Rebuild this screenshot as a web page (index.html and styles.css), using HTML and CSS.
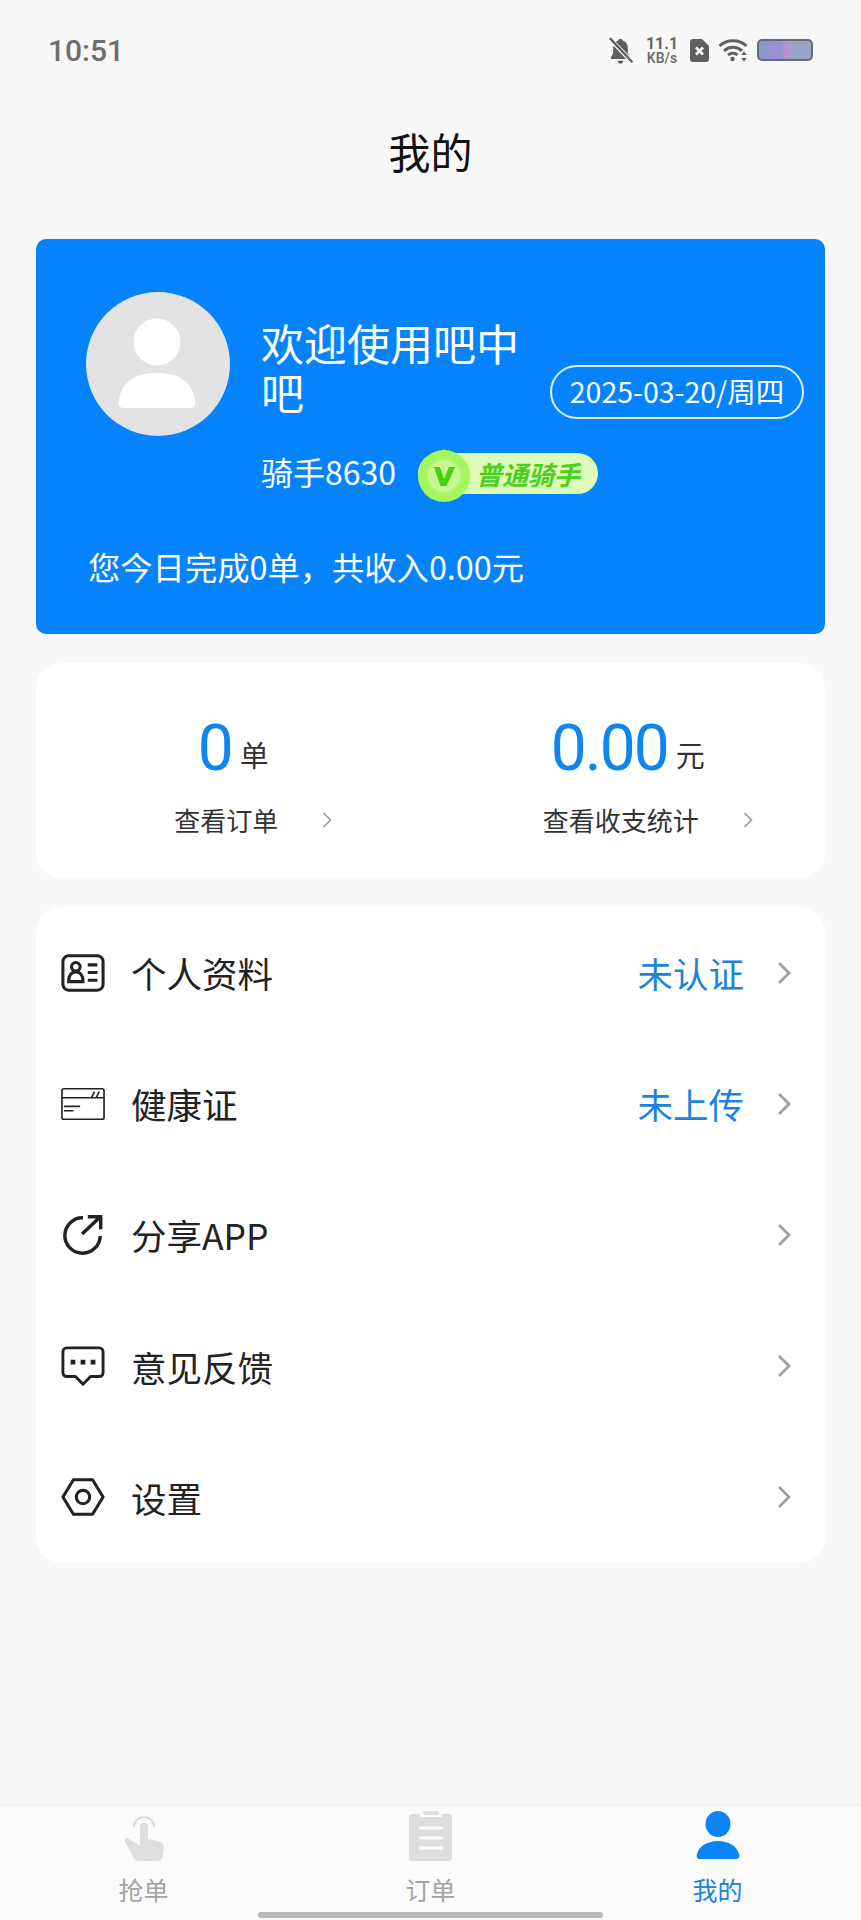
FILE: index.html
```html
<!DOCTYPE html>
<html lang="zh-CN">
<head>
    <meta charset="UTF-8">
    <meta name="viewport" content="width=device-width, initial-scale=1.0">
    <title>我的</title>
    <link rel="stylesheet" href="styles.css">
</head>
<body>
    <div class="page">
        <div class="status-bar">
            <span class="time">10:51</span>
            <div class="status-icons">
                <svg class="ic-bell" viewBox="0 0 24 24"><path d="M12 1.500c-1 0-1.700.7-1.800 1.600C7 4 5.500 6.500 5.500 9.500v5L3.500 18v1.500h17V18l-2-3.500v-5c0-3-1.500-5.500-4.700-6.400-.1-.9-.8-1.600-1.800-1.600zM9.500 21a2.500 2.500 0 0 0 5 0z" fill="#5f5f5f"/><path d="M2.500 1.500l20 21" stroke="#f8f8f8" stroke-width="4"/><path d="M2.500 1l20 21.500" stroke="#5f5f5f" stroke-width="2"/></svg>
                <div class="speed"><span class="speed-num">11.1</span><span class="speed-unit">KB/s</span></div>
                <svg class="ic-sim" viewBox="0 0 19 23"><path d="M3 0h9l7 7v13a3 3 0 0 1-3 3H3a3 3 0 0 1-3-3V3a3 3 0 0 1 3-3z" fill="#5f5f5f"/><path d="M6 8.500l7 7M13 8.500l-7 7" stroke="#fff" stroke-width="2.600"/></svg>
                <svg class="ic-wifi" viewBox="0 0 30 24" fill="none" stroke="#5f5f5f" stroke-width="3"><path d="M1.500 8C8.500 1 21.500 1 28.500 8"/><path d="M6 12.800c5-4.600 13-4.600 18 0"/><path d="M10 17c2.800-2.300 6.700-2.300 9.500 0"/><circle cx="14.500" cy="21" r="2.200" fill="#5f5f5f" stroke="none"/><path d="M26 13.500l-2.800 3.500h5.600zM26 23.500l-2.800-3.500h5.600z" fill="#5f5f5f" stroke="none"/></svg>
                <div class="battery"></div>
            </div>
        </div>

        <h1 class="page-title">我的</h1>

        <div class="profile-card">
            <div class="profile-top">
                <svg class="avatar" viewBox="0 0 144 144"><circle cx="72" cy="72" r="72" fill="#e3e3e5"/><circle cx="71" cy="50" r="23.500" fill="#fff"/><path d="M38 116c-5 0-6-3-5-8 3-19 17-27 38-27s35 8 38 27c1 5 0 8-5 8z" fill="#fff"/></svg>
                <div class="profile-info">
                    <div class="greeting">欢迎使用吧中吧</div>
                    <div class="rider-row">
                        <span class="rider-name">骑手8630</span>
                        <div class="level-badge">
                            <svg class="level-icon" viewBox="0 0 54 58"><path d="M9 14L27 5l18 9v6H9z" fill="#45e01c"/><circle cx="27" cy="32" r="26" fill="#a3f65c"/><circle cx="27" cy="32" r="17" fill="#c5f98f" stroke="#b2f274" stroke-width="2"/><path d="M17 23h6l4 12 5-12h6l-8.500 19h-6z" fill="#47cf12"/></svg>
                            <span class="level-text">普通骑手</span>
                        </div>
                    </div>
                </div>
                <div class="date-pill">2025-03-20/周四</div>
            </div>
            <div class="today-line">您今日完成0单，共收入0.00元</div>
        </div>

        <div class="stats-card">
            <div class="stat">
                <div class="stat-value"><span class="stat-num">0</span><span class="stat-unit">单</span></div>
                <div class="stat-link"><span>查看订单</span><svg class="chev-sm" viewBox="0 0 10 18"><path d="M1.500 2l7 7-7 7" fill="none" stroke="#999" stroke-width="1.600"/></svg></div>
            </div>
            <div class="stat">
                <div class="stat-value"><span class="stat-num">0.00</span><span class="stat-unit">元</span></div>
                <div class="stat-link"><span>查看收支统计</span><svg class="chev-sm" viewBox="0 0 10 18"><path d="M1.500 2l7 7-7 7" fill="none" stroke="#999" stroke-width="1.600"/></svg></div>
            </div>
        </div>

        <div class="menu-card">
            <div class="menu-row">
                <svg class="menu-icon" viewBox="0 0 46 40" fill="none" stroke="#222" stroke-width="3.200"><rect x="2" y="2" width="42" height="36" rx="6"/><circle cx="15.500" cy="13.500" r="4.500"/><path d="M8 29c0-6 2.500-10 7.500-10s7.500 4 7.500 10z"/><path d="M28 11.500h10M28 19.500h10M28 27.500h10"/></svg>
                <span class="menu-label">个人资料</span>
                <span class="menu-status">未认证</span>
                <svg class="chev" viewBox="0 0 14 24"><path d="M2 2l10 10L2 22" fill="none" stroke="#a0a0a0" stroke-width="2.800"/></svg>
            </div>
            <div class="menu-row">
                <svg class="menu-icon" viewBox="0 0 46 34" fill="none" stroke="#222" stroke-width="1.700"><rect x="1" y="1" width="44" height="32" rx="2"/><path d="M1 10.500h44M32 10l3-6M37 10l3-6M3 19.500h17M3 24h10"/></svg>
                <span class="menu-label">健康证</span>
                <span class="menu-status">未上传</span>
                <svg class="chev" viewBox="0 0 14 24"><path d="M2 2l10 10L2 22" fill="none" stroke="#a0a0a0" stroke-width="2.800"/></svg>
            </div>
            <div class="menu-row">
                <svg class="menu-icon" viewBox="0 0 46 46" fill="none" stroke="#222" stroke-width="3.600"><path d="M23 5A18.500 18.500 0 1 0 41 24"/><path d="M22 22L40 5M28 4h13.500v13"/></svg>
                <span class="menu-label">分享APP</span>
                <svg class="chev" viewBox="0 0 14 24"><path d="M2 2l10 10L2 22" fill="none" stroke="#a0a0a0" stroke-width="2.800"/></svg>
            </div>
            <div class="menu-row">
                <svg class="menu-icon" viewBox="0 0 46 42" fill="none" stroke="#222" stroke-width="3"><path d="M6 2h34a4 4 0 0 1 4 4v22a4 4 0 0 1-4 4H31l-8 8-8-8H6a4 4 0 0 1-4-4V6a4 4 0 0 1 4-4z"/><path d="M10 17h5M20.500 17h5M31 17h5" stroke-width="5"/></svg>
                <span class="menu-label">意见反馈</span>
                <svg class="chev" viewBox="0 0 14 24"><path d="M2 2l10 10L2 22" fill="none" stroke="#a0a0a0" stroke-width="2.800"/></svg>
            </div>
            <div class="menu-row">
                <svg class="menu-icon" viewBox="0 0 46 40" fill="none" stroke="#222" stroke-width="3.200"><path d="M13 2h20l11 18-11 18H13L2 20z" stroke-linejoin="round"/><circle cx="23" cy="20" r="7"/></svg>
                <span class="menu-label">设置</span>
                <svg class="chev" viewBox="0 0 14 24"><path d="M2 2l10 10L2 22" fill="none" stroke="#a0a0a0" stroke-width="2.800"/></svg>
            </div>
        </div>

        <div class="tab-bar">
            <div class="tab">
                <svg class="tab-icon" viewBox="0 0 46 50"><path d="M13 16a10 10 0 0 1 20 0" fill="none" stroke="#dedede" stroke-width="2"/><path d="M19 16a4 4 0 0 1 8 0v12l10 2c4 1 6 3 6 7l-1 7c-1 4-3 6-7 6H18c-3 0-5-2-6-5L4 31c-1-3 2-5 4-3l11 7z" fill="#dedede"/></svg>
                <span class="tab-label">抢单</span>
            </div>
            <div class="tab">
                <svg class="tab-icon" viewBox="0 0 46 50"><path d="M4 3h8v3h22V3h8a3 3 0 0 1 2 3v41a3 3 0 0 1-3 3H4a3 3 0 0 1-3-3V6a3 3 0 0 1 3-3z" fill="#dedede"/><rect x="15" y="0" width="16" height="4" rx="2" fill="#dedede"/><path d="M11 17h24M11 27h24M11 37h24" stroke="#fbfbfb" stroke-width="3"/></svg>
                <span class="tab-label">订单</span>
            </div>
            <div class="tab tab-active">
                <svg class="tab-icon" viewBox="0 0 46 50"><ellipse cx="23" cy="13" rx="12.500" ry="13" fill="#0a84f6"/><path d="M6 48c-4 0-5-2-4-5 2-8 11-13 21-13s19 5 21 13c1 3 0 5-4 5z" fill="#0a84f6"/></svg>
                <span class="tab-label">我的</span>
            </div>
            <div class="home-bar"></div>
        </div>
    </div>
</body>
</html>
```

FILE: styles.css
```css
* {
    box-sizing: border-box;
}
body {
    margin: 0;
    background-color: #f8f8f8;
    color: #222;
    font-family: "Noto Sans CJK SC", "Noto Sans", sans-serif;
}
.page {
    position: relative;
    display: flex;
    flex-direction: column;
    width: 861px;
    height: 1920px;
    overflow: hidden;
}

/* status bar */
.status-bar {
    display: flex;
    justify-content: space-between;
    align-items: center;
    height: 100px;
    padding: 0 48px;
}
.time {
    font-family: "Roboto", sans-serif;
    font-size: 30px;
    font-weight: 500;
    color: #6e6e6e;
}
.status-icons {
    display: flex;
    align-items: center;
    gap: 9px;
}
.ic-bell {
    width: 27px;
    height: 27px;
}
.speed {
    display: flex;
    flex-direction: column;
    align-items: center;
    width: 38px;
    font-family: "Roboto", sans-serif;
    color: #666;
}
.speed-num {
    font-size: 16px;
    font-weight: 700;
    line-height: 15px;
}
.speed-unit {
    font-size: 14px;
    font-weight: 500;
    line-height: 14px;
}
.ic-sim {
    width: 19px;
    height: 23px;
}
.ic-wifi {
    width: 30px;
    height: 24px;
}
.battery {
    width: 56px;
    height: 22px;
    border: 2px solid #666a7d;
    border-radius: 5px;
    background: linear-gradient(90deg, #8f97c8 0, #8f97c8 22%, #a48ae0 30%, #8f97c8 42%, #c48ad8 52%, #9ca3c6 62%, #9ca3c6 100%);
}

.page-title {
    margin: 0;
    height: 106px;
    font-size: 42px;
    font-weight: 400;
    line-height: 102px;
    text-align: center;
    color: #111;
}

/* blue card */
.profile-card {
    margin: 33px 36px 0;
    height: 395px;
    padding: 53px 21px 0 50px;
    background-color: #0583fc;
    border-radius: 10px;
    color: #fff;
}
.profile-top {
    display: flex;
    align-items: flex-start;
}
.avatar {
    flex: none;
    width: 144px;
    height: 144px;
}
.profile-info {
    width: 270px;
    margin-left: 31px;
    padding-top: 26px;
}
.greeting {
    font-size: 43px;
    line-height: 49px;
}
.rider-row {
    display: flex;
    align-items: center;
    margin-top: 32px;
}
.rider-name {
    flex: none;
    font-size: 32px;
    line-height: 46px;
}
.date-pill {
    flex: none;
    margin: 73px 0 0 auto;
    width: 254px;
    height: 54px;
    border: 2px solid #dcedff;
    border-radius: 27px;
    font-size: 28.5px;
    line-height: 48px;
    text-align: center;
    white-space: nowrap;
}
.level-badge {
    position: relative;
    flex: none;
    width: 180px;
    height: 41px;
    margin: 5px 0 0 22px;
    padding-left: 58px;
    background-color: #dcfab8;
    border-radius: 21px;
}
.level-icon {
    position: absolute;
    left: -1px;
    top: -9px;
    width: 54px;
    height: 58px;
}
.level-text {
    font-size: 26px;
    font-weight: 700;
    font-style: italic;
    line-height: 41px;
    color: #4ccf1d;
    white-space: nowrap;
}
.today-line {
    margin: 50px 0 0 2px;
    font-size: 32.3px;
    line-height: 44px;
}

/* stats */
.stats-card {
    display: flex;
    margin: 29px 36px 0;
    height: 215px;
    padding-top: 47px;
    background-color: #fff;
    border-radius: 26px;
}
.stat {
    flex: 1;
    display: flex;
    flex-direction: column;
    align-items: center;
}
.stat-value {
    display: flex;
    align-items: center;
    height: 78px;
    color: #222;
}
.stat-num {
    font-family: "Roboto", sans-serif;
    font-size: 64px;
    letter-spacing: -2px;
    line-height: 78px;
    color: #0f86ee;
}
.stat-unit {
    margin: 10px 0 0 8px;
    font-size: 29px;
    color: #333;
}
.stat-link {
    display: flex;
    align-items: center;
    margin: 13px 0 0 40px;
    font-size: 26px;
    line-height: 38px;
    color: #333;
}
.chev-sm {
    width: 10px;
    height: 18px;
    margin-left: 44px;
}

/* menu list */
.menu-card {
    margin: 29px 36px 0;
    height: 656px;
    padding: 0;
    background-color: #fff;
    border-radius: 26px;
}
.menu-row {
    display: flex;
    align-items: center;
    height: 131.2px;
    padding: 0 34px 0 25px;
}
.menu-icon {
    flex: none;
    width: 44px;
    height: 44px;
}
.menu-label {
    margin-left: 26px;
    font-size: 35.5px;
    color: #222;
}
.menu-status {
    margin-left: auto;
    font-size: 35.5px;
    color: #1a83df;
}
.chev {
    flex: none;
    width: 14px;
    height: 24px;
    margin-left: 33px;
}
.menu-row .menu-label + .chev {
    margin-left: auto;
}

/* bottom tabs */
.tab-bar {
    position: relative;
    display: flex;
    margin-top: auto;
    height: 115px;
    padding-top: 5px;
    background-color: #fbfbfb;
    border-top: 1px solid #f0f0f0;
}
.tab {
    flex: 1;
    display: flex;
    flex-direction: column;
    align-items: center;
}
.tab-icon {
    width: 46px;
    height: 50px;
}
.tab-label {
    margin-top: 11px;
    font-size: 25px;
    line-height: 34px;
    color: #a3a3a3;
}
.tab-active .tab-label {
    color: #1683e6;
}
.home-bar {
    position: absolute;
    left: 258px;
    bottom: 2px;
    width: 345px;
    height: 6px;
    background-color: #b9b9b9;
    border-radius: 3px;
}
```
